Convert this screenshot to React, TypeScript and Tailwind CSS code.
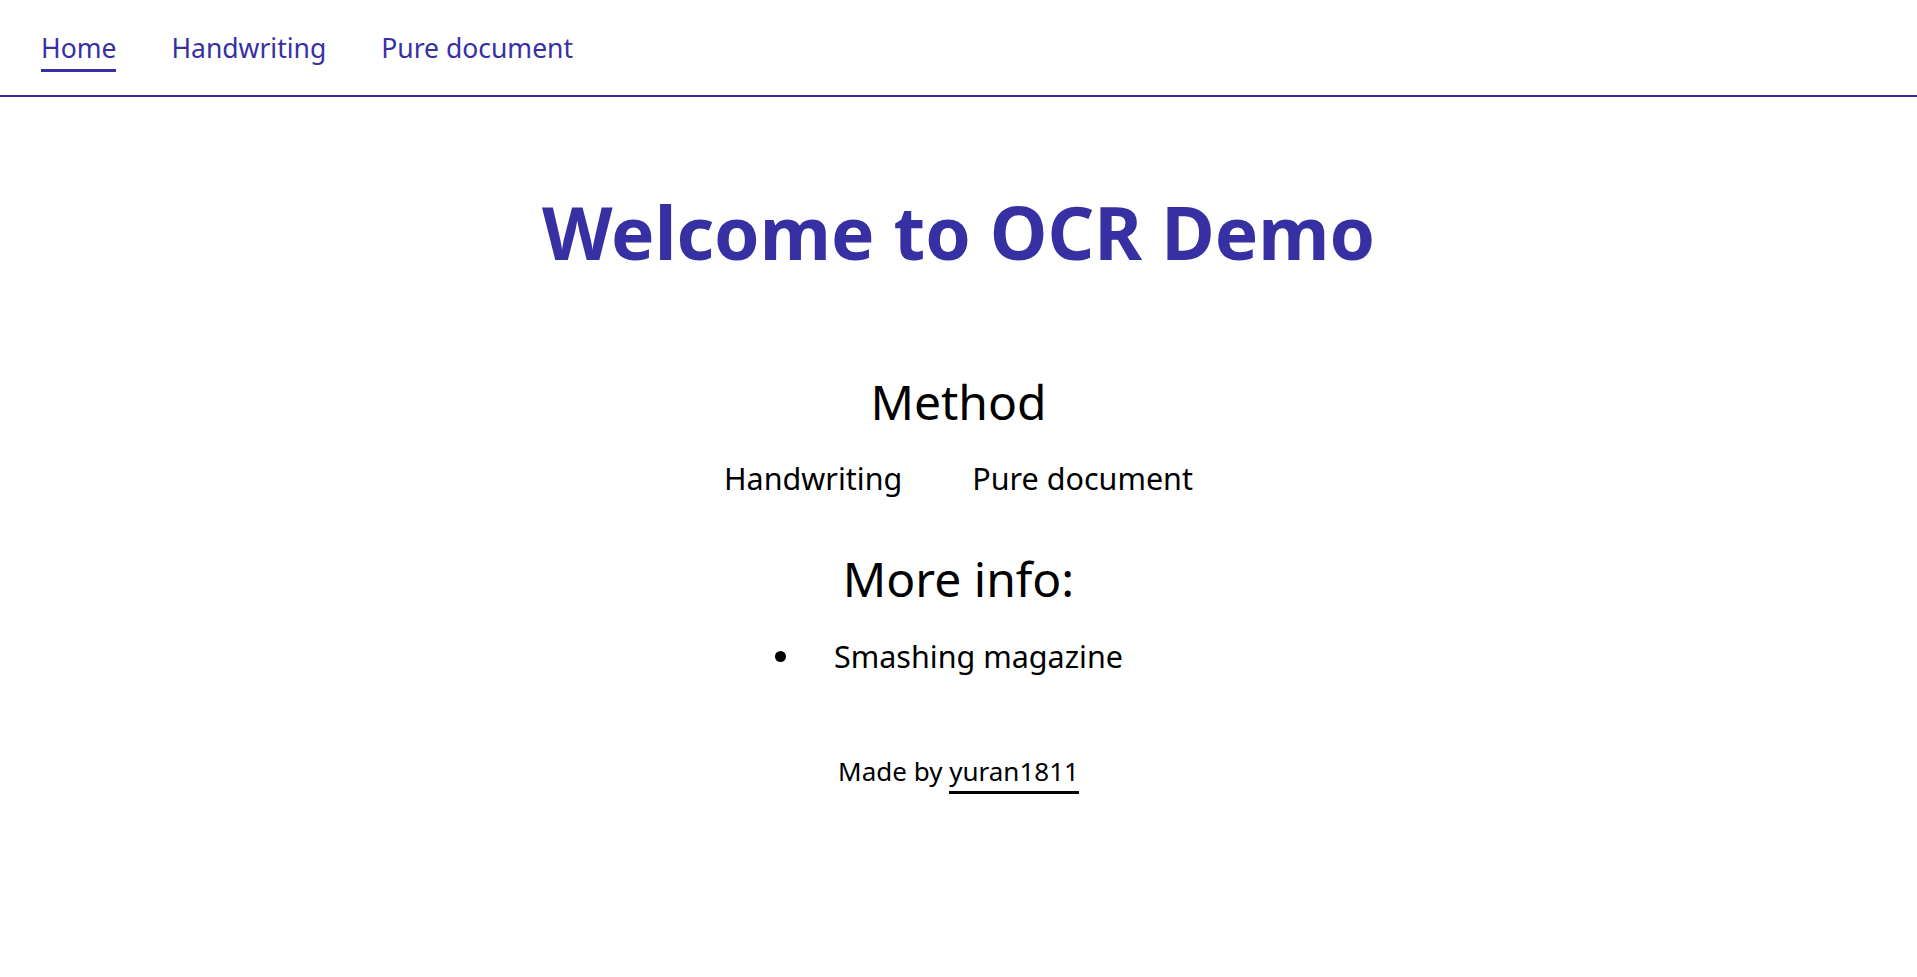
import React from "react";

function App() {
  const nav = ["Home", "Handwriting", "Pure document"];
  return (
    <div className="min-h-screen bg-white text-black" style={{ fontFamily: '"Noto Sans", sans-serif' }}>
      <header className="h-[97px] border-b-2 border-[#3730a3] flex items-start px-[41px] pt-[31px] gap-[55px]">
        {nav.map((item, i) => (
          <a
            key={item}
            className={`text-[26.5px] leading-[34px] text-[#3730a3] pb-[4px] ${i === 0 ? "border-b-[3px] border-[#3730a3]" : ""}`}
          >
            {item}
          </a>
        ))}
      </header>

      <main className="flex flex-col items-center">
        <h1 className="mt-[90px] text-[73px] leading-[90px] font-bold text-[#3730a3]">Welcome to OCR Demo</h1>

        <h2 className="mt-[95px] text-[48px] leading-[60px]">Method</h2>
        <div className="mt-[26px] flex gap-[70px] text-[30.5px] leading-[40px]">
          <a>Handwriting</a>
          <a>Pure document</a>
        </div>

        <h2 className="mt-[51px] text-[48px] leading-[60px]">More info:</h2>
        <ul className="mt-[27px] list-disc text-[30.5px] leading-[40px] pl-[10px]">
          <li className="pl-[30px]">Smashing magazine</li>
        </ul>

        <p className="mt-[78px] text-[26px] leading-[34px]">
          Made by <a className="border-b-[3px] border-black pb-[2px]">yuran1811</a>
        </p>
      </main>
    </div>
  );
}

export default App;
